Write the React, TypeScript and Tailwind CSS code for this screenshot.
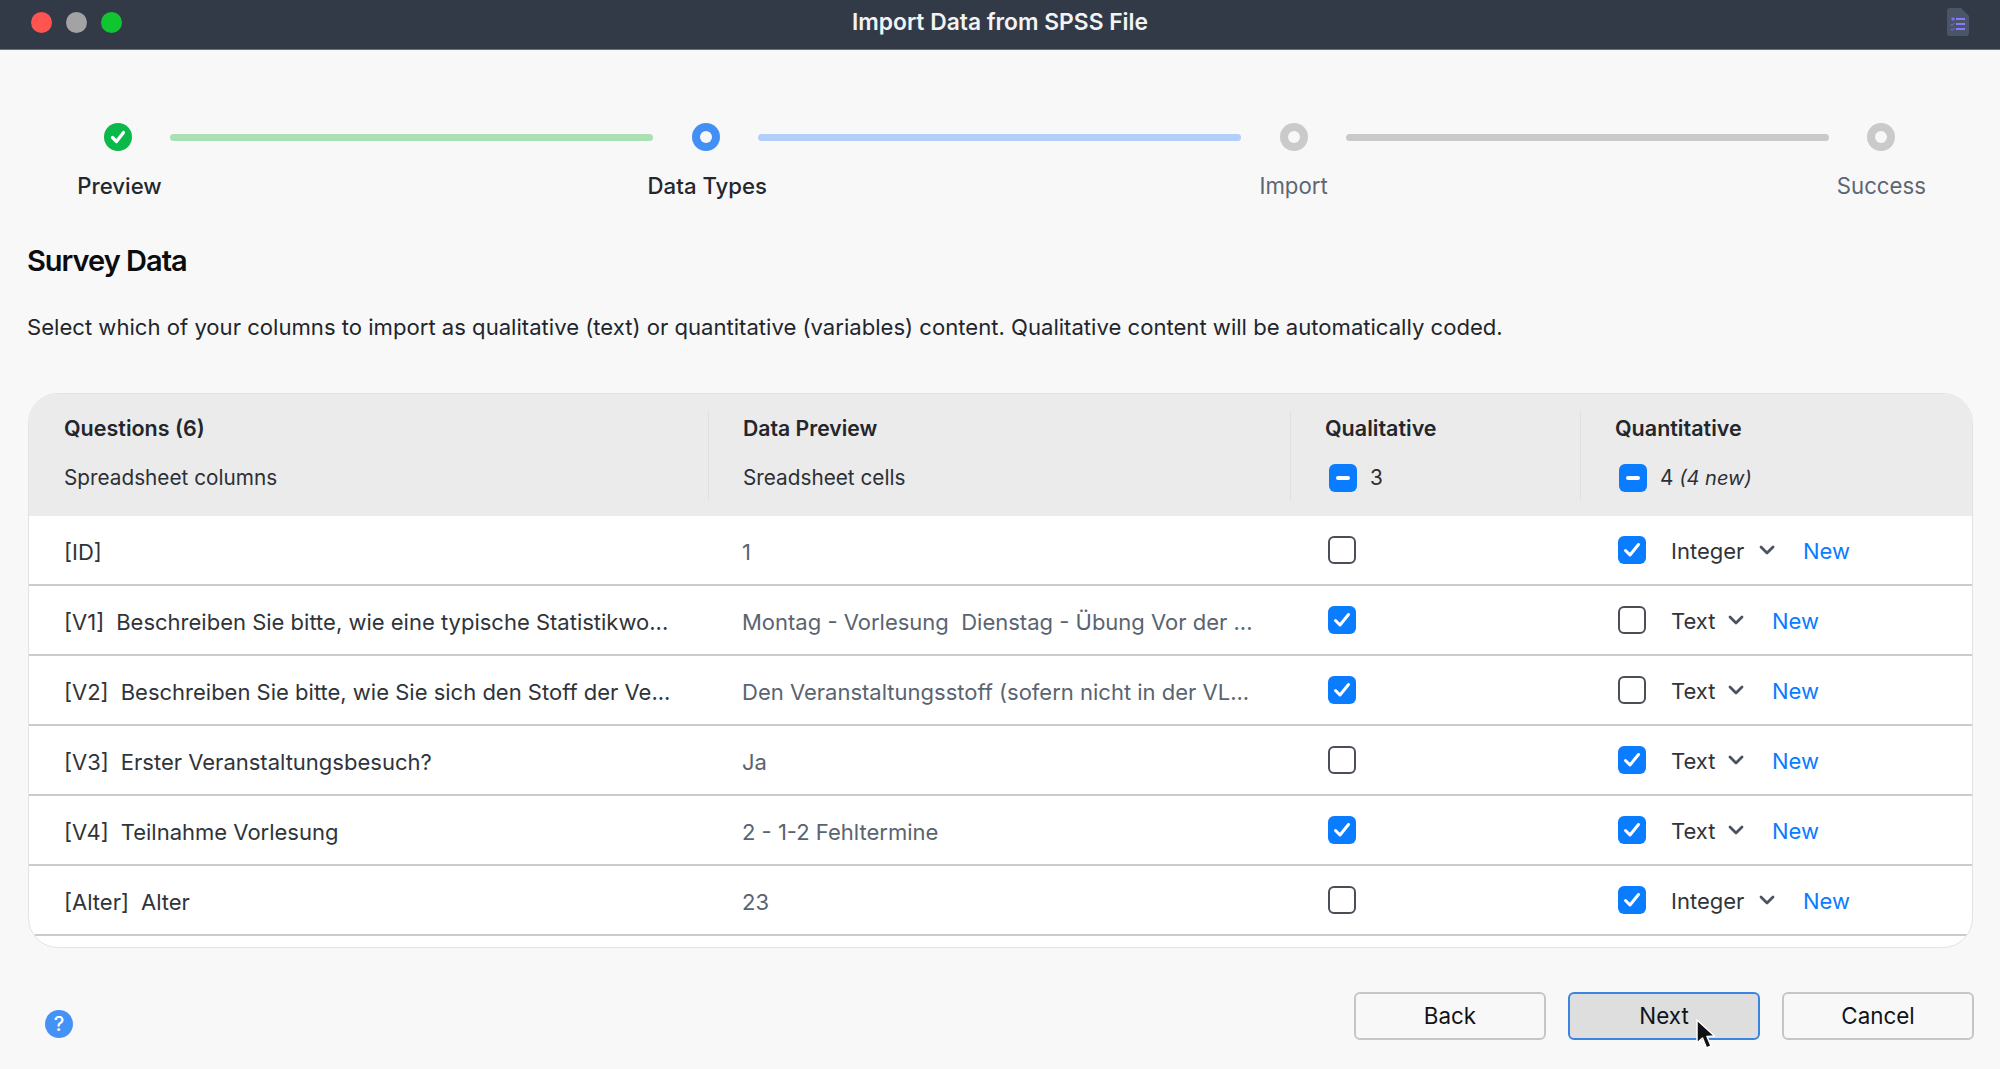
const font = { fontFamily: "Inter, sans-serif" }

const rowGrid = "grid grid-cols-[679px_582px_290px_1fr]"

type Row = {
  tag: string
  label: string
  preview: string
  qual: boolean
  quant: boolean
  type: string
}

const rows: Row[] = [
  { tag: "[ID]", label: "", preview: "1", qual: false, quant: true, type: "Integer" },
  { tag: "[V1]", label: "Beschreiben Sie bitte, wie eine typische Statistikwo...", preview: "Montag - Vorlesung  Dienstag - Übung Vor der ...", qual: true, quant: false, type: "Text" },
  { tag: "[V2]", label: "Beschreiben Sie bitte, wie Sie sich den Stoff der Ve...", preview: "Den Veranstaltungsstoff (sofern nicht in der VL...", qual: true, quant: false, type: "Text" },
  { tag: "[V3]", label: "Erster Veranstaltungsbesuch?", preview: "Ja", qual: false, quant: true, type: "Text" },
  { tag: "[V4]", label: "Teilnahme Vorlesung", preview: "2 - 1-2 Fehltermine", qual: true, quant: true, type: "Text" },
  { tag: "[Alter]", label: "Alter", preview: "23", qual: false, quant: true, type: "Integer" },
]

function Checkbox({ state }: { state: "on" | "off" | "mixed" }) {
  if (state === "off") {
    return <div className="w-[28px] h-[28px] rounded-[6px] border-2 border-[#4a4f57] bg-white" />
  }
  return (
    <div className="w-[28px] h-[28px] rounded-[6px] bg-[#0a7cff] flex items-center justify-center">
      {state === "on" ? (
        <svg width="20" height="20" viewBox="0 0 20 20" fill="none">
          <path d="M3.5 10.5 L8 15 L16.5 4.5" stroke="#fff" strokeWidth="3" strokeLinecap="round" strokeLinejoin="round" />
        </svg>
      ) : (
        <div className="w-[14px] h-[4px] rounded-full bg-white" />
      )}
    </div>
  )
}

function Step({ label, state }: { label: string; state: "done" | "active" | "todo" }) {
  const labelColor = state === "todo" ? "text-[#5d6673] font-normal" : "text-[#23272e] font-medium ml-[3px]"
  return (
    <div className="w-[28px] flex flex-col items-center">
      {state === "done" ? (
        <div className="w-[28px] h-[28px] rounded-full bg-[#0bb84a] flex items-center justify-center">
          <svg width="18" height="18" viewBox="0 0 18 18" fill="none">
            <path d="M3.5 9.5 L7.5 13.5 L14.5 4.5" stroke="#fff" strokeWidth="3.2" strokeLinecap="round" strokeLinejoin="round" />
          </svg>
        </div>
      ) : (
        <div className={`w-[28px] h-[28px] rounded-full flex items-center justify-center ${state === "active" ? "bg-[#4290f5]" : "bg-[#cacaca]"}`}>
          <div className="w-[12px] h-[12px] rounded-full bg-[#f8f8f8]" />
        </div>
      )}
      <div className={`mt-[21px] text-[22.2px] leading-[28px] whitespace-nowrap ${labelColor}`}>{label}</div>
    </div>
  )
}

function Chevron() {
  return (
    <svg width="16" height="12" viewBox="0 0 16 12" fill="none">
      <path d="M2 3 L8 9 L14 3" stroke="#4a535f" strokeWidth="2.8" strokeLinecap="round" strokeLinejoin="round" />
    </svg>
  )
}

export default function App() {
  return (
    <div style={font} className="w-[2000px] h-[1069px] overflow-hidden bg-[#f8f8f8] flex flex-col">
      <div className="h-[50px] shrink-0 bg-[#323a47] border-b border-[#6a727d] flex items-center px-[31px] pb-[5px]">
        <div className="w-[150px] flex gap-[14px]">
          <div className="w-[21px] h-[21px] rounded-full bg-[#ff5450]" />
          <div className="w-[21px] h-[21px] rounded-full bg-[#a3a3a3]" />
          <div className="w-[21px] h-[21px] rounded-full bg-[#0fc631]" />
        </div>
        <div className="flex-1 pt-[1px] text-center text-[22.8px] font-semibold text-[#f2f3f5]">Import Data from SPSS File</div>
        <div className="w-[150px] flex justify-end">
          <svg width="22" height="28" viewBox="0 0 22 28" fill="none">
            <path d="M3 0 H14 L22 8 V25 a3 3 0 0 1 -3 3 H3 a3 3 0 0 1 -3 -3 V3 a3 3 0 0 1 3 -3 Z" fill="#4a5568" />
            <circle cx="6" cy="11" r="1.8" fill="#7c6cf0" />
            <rect x="9" y="10" width="9" height="2" fill="#8a78ff" />
            <path d="M3.5 16 L5 17.5 L7.5 15" stroke="#7c6cf0" strokeWidth="1" />
            <rect x="9" y="15" width="9" height="2" fill="#8a78ff" />
            <path d="M3.5 21 L5 22.5 L7.5 20" stroke="#7c6cf0" strokeWidth="1" />
            <rect x="9" y="20" width="9" height="2" fill="#8a78ff" />
          </svg>
        </div>
      </div>

      <div className="flex items-start pl-[104px] pt-[73px] gap-[38.4px]">
        <Step label="Preview" state="done" />
        <div className="mt-[11px] w-[483px] h-[7px] rounded-full bg-[#abe0b4]" />
        <Step label="Data Types" state="active" />
        <div className="mt-[11px] w-[483px] h-[7px] rounded-full bg-[#b1cff8]" />
        <Step label="Import" state="todo" />
        <div className="mt-[11px] w-[483px] h-[7px] rounded-full bg-[#c9c9c9]" />
        <Step label="Success" state="todo" />
      </div>

      <div className="pl-[27px] pt-[44px] text-[29px] leading-[34px] font-semibold text-[#0b0c0e] tracking-[-1px]">Survey Data</div>
      <div className="pl-[27px] pt-[35px] text-[22.1px] leading-[28px] text-[#22262c]">
        Select which of your columns to import as qualitative (text) or quantitative (variables) content. Qualitative content will be automatically coded.
      </div>

      <div className="mt-[52px] ml-[28px] w-[1945px] h-[555px] rounded-[30px] border border-[#e3e3e3] bg-white overflow-hidden shrink-0">
        <div className={`${rowGrid} h-[122px] bg-[#ebebeb] pt-[17px] text-[20.75px] leading-[26px] text-[#2c3036]`}>
          <div className="pl-[35px] h-[89px] flex flex-col justify-between pt-[4px] pb-[9px]">
            <div className="text-[21.5px] font-semibold text-[#23262b]">Questions (6)</div>
            <div>Spreadsheet columns</div>
          </div>
          <div className="pl-[34px] h-[89px] flex flex-col justify-between pt-[4px] pb-[9px] border-l border-[#e0e0e0]">
            <div className="text-[21.2px] font-semibold text-[#23262b]">Data Preview</div>
            <div>Sreadsheet cells</div>
          </div>
          <div className="pl-[34px] h-[89px] flex flex-col justify-between pt-[4px] pb-[8px] border-l border-[#e0e0e0]">
            <div className="text-[21.5px] font-semibold text-[#23262b]">Qualitative</div>
            <div className="flex items-center gap-[13px] pl-[4px]">
              <Checkbox state="mixed" />
              <span>3</span>
            </div>
          </div>
          <div className="pl-[34px] h-[89px] flex flex-col justify-between pt-[4px] pb-[8px] border-l border-[#e0e0e0]">
            <div className="text-[21.5px] font-semibold text-[#23262b]">Quantitative</div>
            <div className="flex items-center gap-[13px] pl-[4px]">
              <Checkbox state="mixed" />
              <span>
                4 <i className="text-[20px]">(4 new)</i>
              </span>
            </div>
          </div>
        </div>
        {rows.map((row) => (
          <div key={row.tag} className={`${rowGrid} h-[70px] border-b-2 border-[#cbcbcb] items-center text-[22px]`}>
            <div className="pl-[35px] pt-[4px] text-[#2f343a] whitespace-nowrap">
              <span className="mr-[12px]">{row.tag}</span>
              {row.label}
            </div>
            <div className="pl-[34px] pt-[4px] text-[#5a6470] whitespace-pre">{row.preview}</div>
            <div className="pl-[38px]">
              <Checkbox state={row.qual ? "on" : "off"} />
            </div>
            <div className="pl-[38px] flex items-center">
              <Checkbox state={row.quant ? "on" : "off"} />
              <span className={`ml-[25px] pt-[3px] text-[#30353b] ${row.type === "Integer" ? "w-[88px]" : "w-[57px]"}`}>{row.type}</span>
              <Chevron />
              <span className="ml-[28px] pt-[3px] text-[#0a7cff]">New</span>
            </div>
          </div>
        ))}
      </div>

      <div className="flex items-start justify-between pl-[45px] pr-[26px] pt-[44px]">
        <div className="mt-[18px] w-[28px] h-[28px] rounded-full bg-[#4492f5] flex items-center justify-center text-white text-[20px] font-medium">?</div>
        <div className="flex gap-[22px] text-[22.4px] text-[#111317]">
          <button className="w-[192px] h-[48px] rounded-[6px] border-2 border-[#c6c6c6] bg-[#f8f8f8]">Back</button>
          <button className="relative w-[192px] h-[48px] rounded-[6px] border-2 border-[#3b84e2] bg-[#dedede]">
            Next
            <svg className="absolute left-[125px] top-[25px]" width="22" height="32" viewBox="0 0 22 32" fill="none">
              <path d="M2 1 L2 24 L7.5 19 L11.5 29 L16 27 L12 17.5 L19.5 17 Z" fill="#111" stroke="#fff" strokeWidth="1.5" strokeLinejoin="round" />
            </svg>
          </button>
          <button className="w-[192px] h-[48px] rounded-[6px] border-2 border-[#c6c6c6] bg-[#f8f8f8]">Cancel</button>
        </div>
      </div>
    </div>
  )
}
